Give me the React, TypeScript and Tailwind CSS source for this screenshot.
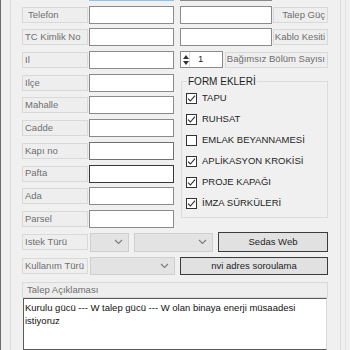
import React from "react";

const Lbl = ({ children, cls = "" }: { children?: React.ReactNode; cls?: string }) => (
  <div className={`h-[16px] flex items-center border border-[#d9d9d9] bg-[#eeeeee] text-[#6f6f6f] whitespace-nowrap overflow-hidden ${cls}`}>
    {children}
  </div>
);

const Input = ({ cls = "" }: { cls?: string }) => (
  <div className={`h-[18px] bg-white border ${cls}`} />
);

const Chevron = () => (
  <svg width="9" height="6" viewBox="0 0 9 6">
    <path d="M1 1 L4.5 4.5 L8 1" stroke="#7a7a7a" strokeWidth="1.1" fill="none" />
  </svg>
);

const Check = ({ checked, label }: { checked: boolean; label: string }) => (
  <div className="h-[21px] flex items-center gap-[5px] pl-[4px]">
    <div className="w-[11px] h-[11px] border border-[#333333] bg-white flex items-center justify-center">
      {checked && (
        <svg width="9" height="9" viewBox="0 0 9 9">
          <path d="M1 4.6 L3.4 7 L8 1.6" stroke="#2a2a2a" strokeWidth="1.1" fill="none" />
        </svg>
      )}
    </div>
    <span className="text-[#1e1e1e] text-[9.5px]">{label}</span>
  </div>
);

export default function App() {
  return (
    <div className="w-[350px] h-[350px] overflow-hidden bg-[#f0f0f0] flex text-[9.5px] font-['Liberation_Sans',Arial,sans-serif]">
      <div className="w-px h-full bg-[#6b6b6b]" />
      <div className="w-[9px]" />
      <div className="w-[331px] h-full border-l border-r border-[#dadada] pl-[11px] flex flex-col">
        {/* top section */}
        <div className="flex gap-[6px]">
          {/* left column */}
          <div className="flex flex-col gap-[4.7px] w-[152px] -mt-[17px]">
            <div className="h-[18px] flex items-center gap-px">
              <Lbl cls="w-[66px] pl-[2px]" />
              <Input cls="w-[85px] border-[#8cc4ef]" />
            </div>
            {[
              ["Telefon", "pl-[5px]", "border-[#8a8a8a]"],
              ["TC Kimlik No", "pl-[2px]", "border-[#8a8a8a]"],
              ["Il", "pl-[2px]", "border-[#8a8a8a]"],
              ["Ilçe", "pl-[2px]", "border-[#8a8a8a]"],
              ["Mahalle", "pl-[2px]", "border-[#8a8a8a]"],
              ["Cadde", "pl-[2px]", "border-[#8a8a8a]"],
              ["Kapı no", "pl-[2px]", "border-[#707070]"],
              ["Pafta", "pl-[2px]", "border-[#3a3a3a]"],
              ["Ada", "pl-[2px]", "border-[#8a8a8a]"],
              ["Parsel", "pl-[2px]", "border-[#8a8a8a]"],
            ].map(([t, p, b]) => (
              <div key={t} className="h-[18px] flex items-center gap-px">
                <Lbl cls={`w-[66px] ${p}`}>{t}</Lbl>
                <Input cls={`w-[85px] ${b}`} />
              </div>
            ))}
          </div>
          {/* right column */}
          <div className="flex flex-col w-[148px] -mt-[17px]">
            <div className="flex flex-col gap-[4.7px]">
              <div className="h-[18px] flex items-center gap-px">
                <Input cls="w-[92px] border-[#8a8a8a]" />
                <Lbl cls="w-[55px] justify-end pr-[2px]" />
              </div>
              <div className="h-[18px] flex items-center gap-px">
                <Input cls="w-[92px] border-[#8a8a8a]" />
                <Lbl cls="w-[55px] justify-end pr-[2px]">Talep Güç</Lbl>
              </div>
              <div className="h-[18px] flex items-center gap-px">
                <Input cls="w-[92px] border-[#8a8a8a]" />
                <Lbl cls="w-[55px] justify-end pr-[2px]">Kablo Kesiti</Lbl>
              </div>
              <div className="h-[17px] flex items-center gap-[2px]">
                <div className="w-[43px] h-[17px] bg-white border border-[#8a8a8a] flex items-center">
                  <div className="w-[8px] h-full flex flex-col items-center justify-center gap-[2px] border-r border-[#dcdcdc] ml-px">
                    <svg width="6" height="4" viewBox="0 0 6 4"><path d="M0 4 L3 0 L6 4 Z" fill="#333" /></svg>
                    <svg width="6" height="4" viewBox="0 0 6 4"><path d="M0 0 L3 4 L6 0 Z" fill="#333" /></svg>
                  </div>
                  <span className="ml-[8px] text-[#1e1e1e]">1</span>
                </div>
                <Lbl cls="w-[103px] justify-end pr-[2px]">Bağımsız Bölüm Sayısı</Lbl>
              </div>
            </div>
            <fieldset className="mt-[7px] ml-px w-[147px] border border-[#dcdcdc] pb-[3px]">
              <legend className="ml-[5px] px-px text-[10px] leading-[13px] text-[#1e1e1e]">FORM EKLERİ</legend>
              <Check checked label="TAPU" />
              <Check checked label="RUHSAT" />
              <Check checked={false} label="EMLAK BEYANNAMESİ" />
              <Check checked label="APLİKASYON KROKİSİ" />
              <Check checked label="PROJE KAPAĞI" />
              <Check checked label="İMZA SÜRKÜLERİ" />
            </fieldset>
          </div>
        </div>

        {/* Istek Turu */}
        <div className="mt-[5px] h-[19px] flex items-center">
          <Lbl cls="w-[66px] pl-[2px]">Istek Türü</Lbl>
          <div className="ml-[2px] w-[39px] h-[19px] bg-[#e3e3e3] border border-[#cfcfcf] flex items-center justify-end pr-[5px]"><Chevron /></div>
          <div className="ml-[5px] w-[79px] h-[19px] bg-[#e3e3e3] border border-[#cfcfcf] flex items-center justify-end pr-[5px]"><Chevron /></div>
          <div className="ml-[5px] w-[110px] h-[20px] bg-[#e1e1e1] border border-[#3c3c3c] flex items-center justify-center text-[#1e1e1e]">Sedas Web</div>
        </div>

        {/* Kullanim Turu */}
        <div className="mt-[5px] h-[18px] flex items-center">
          <Lbl cls="w-[66px] pl-[2px]">Kullanım Türü</Lbl>
          <div className="ml-[2px] w-[85px] h-[18px] bg-[#e3e3e3] border border-[#cfcfcf] flex items-center justify-end pr-[5px]"><Chevron /></div>
          <div className="ml-[5px] w-[148px] h-[18px] bg-[#e1e1e1] border border-[#3c3c3c] flex items-center justify-center text-[#1e1e1e]">nvi adres soroulama</div>
        </div>

        {/* Talep Aciklamasi */}
        <div className="mt-[7px]">
          <Lbl cls="w-[306px] h-[15px] pl-[4px]">Talep Açıklaması</Lbl>
        </div>
        <div className="ml-px w-[304px] h-[80px] bg-white border border-[#5a5a5a] border-r-[#dadada] px-[1px] pt-[2px] text-[#111] leading-[13px]">
          Kurulu gücü --- W talep gücü --- W olan binaya enerji müsaadesi
          <br />
          istiyoruz
        </div>
      </div>
      <div className="w-[4px]" />
      <div className="w-px h-full bg-[#e2e2e2]" />
    </div>
  );
}
